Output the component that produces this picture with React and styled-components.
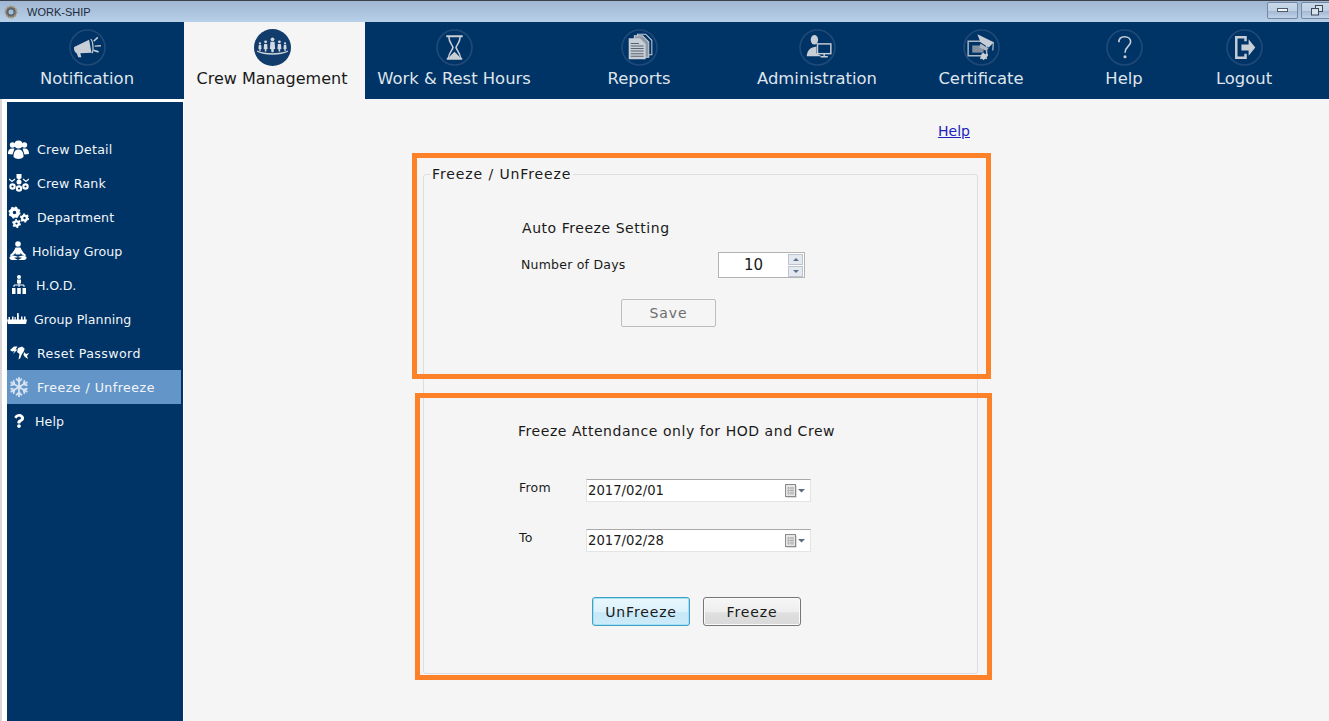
import React from 'react'
import styled, { createGlobalStyle } from 'styled-components'
import { FaQuestion, FaRegSnowflake } from 'react-icons/fa'

const GlobalStyle = createGlobalStyle`
  html, body {
    margin: 0;
    padding: 0;
    background: #f5f5f5;
    overflow: hidden;
  }
  * { box-sizing: border-box; }
`

const Window = styled.div`
  width: 1329px;
  height: 721px;
  display: flex;
  flex-direction: column;
  overflow: hidden;
  font-family: "DejaVu Sans", Verdana, sans-serif;
`

const TitleBar = styled.div`
  height: 22px;
  flex: none;
  display: flex;
  align-items: center;
  padding-left: 3px;
  border-top: 1px solid #3c414b;
  background: linear-gradient(#9fb7d2, #b8cfe8);
`

const AppName = styled.span`
  margin-left: 8px;
  font-family: "Liberation Sans", Arial, sans-serif;
  font-size: 11px;
  color: #1c2a3c;
`

const WindowButtons = styled.div`
  margin-left: auto;
  display: flex;
  gap: 3px;
  align-self: flex-start;
  margin-top: 1px;
  margin-right: -3px;
`

const WindowButton = styled.div`
  width: 31px;
  height: 17px;
  display: flex;
  align-items: center;
  justify-content: center;
  border: 1px solid #76899f;
  border-radius: 2px;
  background: linear-gradient(#c9d8ea 0%, #c0d1e5 50%, #a4bad3 55%, #bfd2e8 100%);
`

const NavBar = styled.nav`
  height: 77px;
  flex: none;
  display: flex;
  background: #003366;
`

const Tab = styled.div`
  width: ${({ $w }) => $w}px;
  flex: none;
  display: flex;
  flex-direction: column;
  align-items: center;
  padding: 7px ${({ $shift }) => $shift || 0}px 0 0;
  background: ${({ $active }) => ($active ? '#f5f5f5' : 'transparent')};
  color: ${({ $active }) => ($active ? '#1a1a1a' : '#dfe5ec')};
`

const TabIcon = styled.svg`
  width: 37px;
  height: 37px;
  display: block;
`

const TabLabel = styled.span`
  margin-top: 1px;
  font-size: ${({ $active }) => ($active ? 16 : 16.4)}px;
  line-height: 24px;
  white-space: nowrap;
`

const Body = styled.div`
  flex: 1;
  display: flex;
  min-height: 0;
`

const SideWrap = styled.aside`
  width: 184px;
  flex: none;
  padding: 3px 1px 0 5px;
  background: #fff;
  border-left: 2px solid #d8d8d8;
`

const SideMenu = styled.div`
  height: 100%;
  padding-top: 30px;
  background: #003366;
`

const SideItem = styled.div`
  height: 34px;
  width: 174px;
  display: flex;
  align-items: center;
  padding-left: ${({ $pad }) => $pad || 0}px;
  background: ${({ $active }) => ($active ? '#6495c8' : 'transparent')};
  color: #f2f5f8;
`

const SideIcon = styled.span`
  width: ${({ $w }) => $w}px;
  flex: none;
  display: flex;
  justify-content: center;
  align-items: center;
  color: #fff;
`

const SideLabel = styled.span`
  margin-left: ${({ $gap }) => $gap}px;
  font-size: 12.6px;
  letter-spacing: ${({ $ls }) => $ls || 0}px;
  white-space: nowrap;
`

const Main = styled.main`
  position: relative;
  flex: 1;
  padding: 23px 0 0 239px;
  background: #f5f5f5;
`

const HelpRow = styled.div`
  width: 555px;
  height: 18px;
  padding-right: 8px;
  margin-bottom: 25px;
  text-align: right;
  font-size: 14px;
  line-height: 18px;
`

const HelpLink = styled.a`
  color: #2222bb;
  text-decoration: underline;
`

const Group = styled.fieldset`
  width: 555px;
  height: 509px;
  margin: 0;
  padding: 0;
  border: 1px solid #dcdfe2;
  border-radius: 3px;
  min-width: 0;
`

const GroupTitle = styled.legend`
  margin-left: 6px;
  padding: 0 2px;
  font-size: 14px;
  letter-spacing: 0.9px;
  line-height: 18px;
  color: #1a1a1a;
`

const Section = styled.section`
  display: flex;
  flex-direction: column;
  align-items: flex-start;
`

const SectionTitle = styled.h3`
  margin: ${({ $top }) => $top}px 0 0 ${({ $left }) => $left}px;
  font-size: 14px;
  font-weight: 400;
  letter-spacing: 0.55px;
  line-height: 20px;
  color: #1a1a1a;
`

const FieldRow = styled.div`
  display: flex;
  align-items: ${({ $top }) => ($top ? 'flex-start' : 'center')};
  margin: ${({ $mt }) => $mt}px 0 0 ${({ $left }) => $left}px;
`

const FieldLabel = styled.label`
  width: ${({ $w }) => $w}px;
  font-size: 12.5px;
  letter-spacing: 0.22px;
  line-height: 16px;
  padding-top: ${({ $dropped }) => ($dropped ? 1 : 0)}px;
  color: #1a1a1a;
`

const Spinner = styled.div`
  width: 87px;
  height: 26px;
  display: flex;
  align-items: center;
  justify-content: space-between;
  padding: 0 1px 0 25px;
  border: 1px solid #b3b3b3;
  background: #fff;
  font-size: 15px;
  color: #1a1a1a;
`

const SpinButtons = styled.div`
  width: 15px;
  display: flex;
  flex-direction: column;
  gap: 1px;
`

const SpinButton = styled.div`
  height: 11px;
  display: flex;
  align-items: center;
  justify-content: center;
  border: 1px solid #bcc4cf;
  background: #e4e9f0;
  &::after {
    content: '';
    border-left: 3px solid transparent;
    border-right: 3px solid transparent;
    ${({ $down }) => ($down ? 'border-top' : 'border-bottom')}: 3px solid #5e6f8a;
  }
`

const SaveButton = styled.button`
  width: 95px;
  height: 28px;
  margin: 21px 0 0 197px;
  padding: 0;
  border: 1px solid #bdbdbd;
  border-radius: 2px;
  background: #f5f5f5;
  font-family: inherit;
  font-size: 14px;
  letter-spacing: 0.9px;
  color: #6e6e6e;
`

const DateField = styled.div`
  width: 225px;
  height: 23px;
  display: flex;
  align-items: center;
  justify-content: space-between;
  padding: 0 5px 0 1px;
  border: 1px solid #e4e4e4;
  border-top-color: #a9a9a9;
  background: #fff;
  font-size: 13.2px;
  color: #1a1a1a;
`

const CalendarIcon = styled.svg`
  width: 20px;
  height: 14px;
  display: block;
`

const ButtonRow = styled.div`
  display: flex;
  gap: 13px;
  margin: 45px 0 0 168px;
`

const ActionButton = styled.button`
  width: 98px;
  height: 29px;
  padding: 0;
  border-radius: 3px;
  font-family: inherit;
  font-size: 14px;
  letter-spacing: 0.85px;
  color: #1a1a1a;
  border: 1px solid ${({ $focus }) => ($focus ? '#3f9fc4' : '#777')};
  box-shadow: inset 0 0 0 1px ${({ $focus }) => ($focus ? '#a5e0f5' : '#fafafa')};
  background: ${({ $focus }) =>
    $focus
      ? 'linear-gradient(#e9f7fd 0%, #dcf1fb 50%, #c6e8f8 55%, #cdebf9 100%)'
      : 'linear-gradient(#f6f6f6 0%, #eeeeee 50%, #dfdfdf 55%, #d9d9d9 100%)'};
`

const Annotation = styled.div`
  position: absolute;
  left: ${({ $x }) => $x}px;
  top: ${({ $y }) => $y}px;
  width: ${({ $w }) => $w}px;
  height: ${({ $h }) => $h}px;
  border: 5px solid #fd8128;
  pointer-events: none;
`

const Ring = ({ dark }) =>
  dark ? (
    <circle cx="18" cy="18" r="18" fill="#123c6c" />
  ) : (
    <circle cx="18" cy="18" r="17" fill="none" stroke="#1f4a78" strokeWidth="1.6" />
  )

const tabIcons = {
  bullhorn: (
    <g fill="#c8ced6">
      <path d="M5 17.5 L19.5 10.5 L22 23 L11 23.5 L12 27.5 L9 27.5 L7.5 23.5 C5.5 23 4.5 19.5 5 17.5 Z" />
      <path d="M21 10 C23.5 11 24 21 22.5 23.5" fill="none" stroke="#c8ced6" strokeWidth="1.2" />
      <path d="M23.5 11.5 L27.5 7.5 L28.5 8.8 L24.5 12.5 Z M25 16 L31 15.5 L31 17 L25 17.2 Z M24 20 L29 21.5 L28.5 23 L23.5 21.5 Z" />
    </g>
  ),
  crew: (
    <g fill="#d3d9e0">
      <circle cx="18" cy="10" r="1.8" />
      <path d="M16 12.5 h4 l.6 7 h-1.2 l-.4 3 h-2 l-.4 -3 h-1.2 Z" />
      <circle cx="11.3" cy="12.5" r="1.4" />
      <path d="M9.8 14.5 h3 l.4 5 h-1 l-.2 2.5 h-1.4 l-.2 -2.5 h-1 Z" />
      <circle cx="24.7" cy="12.5" r="1.4" />
      <path d="M23.2 14.5 h3 l.4 5 h-1 l-.2 2.5 h-1.4 l-.2 -2.5 h-1 Z" />
      <circle cx="5.8" cy="14" r="1.1" />
      <path d="M4.6 15.5 h2.4 l.3 4 h-.8 l-.1 2 h-1.2 l-.1 -2 h-.8 Z" />
      <circle cx="30.2" cy="14" r="1.1" />
      <path d="M29 15.5 h2.4 l.3 4 h-.8 l-.1 2 h-1.2 l-.1 -2 h-.8 Z" />
      <path d="M3 21 C10 24.5 26 24.5 33 21 L33 22.2 C26 26 10 26 3 22.2 Z" />
    </g>
  ),
  hourglass: (
    <g>
      <path d="M10 7 h16 M10.5 29 h15" stroke="#c8ced6" strokeWidth="2" fill="none" />
      <path d="M12.5 7.5 C12.5 13 16 15.5 16.5 18 C16 20.5 12.5 23 12 28.5 M23.5 7.5 C23.5 13 20 15.5 19.5 18 C20 20.5 23.5 23 24 28.5" stroke="#c8ced6" strokeWidth="1.5" fill="none" />
      <path d="M12.5 28.5 C14 25 16.5 24.5 18 22 C19.5 24.5 22 25 23.5 28.5 Z" fill="#c8ced6" />
    </g>
  ),
  reports: (
    <g>
      <path d="M16 5 h8 l6 6 v14 h-14 Z" fill="#003366" stroke="#c8ced6" strokeWidth="1" />
      <path d="M13 6.5 h8 l6 6 v15 h-14 Z" fill="#8f99a6" stroke="#c8ced6" strokeWidth="1" />
      <path d="M7.5 9 h11 l5.5 5.5 v15 h-16.5 Z" fill="#c8ced6" />
      <path d="M9.5 14 h8 M9.5 16.5 h12.5 M9.5 19 h12.5 M9.5 21.5 h12.5 M9.5 24 h12.5 M9.5 26.5 h12.5" stroke="#59636f" strokeWidth="1" />
    </g>
  ),
  admin: (
    <g>
      <ellipse cx="15" cy="10.5" rx="3.6" ry="4.6" fill="#c8ced6" />
      <path d="M7.5 26.5 C8 21 10.5 19 13 18 L17 17 L17 23.5 L22 26.5 Z" fill="#c8ced6" />
      <rect x="18" y="14.5" width="13" height="9.5" fill="#003366" stroke="#c8ced6" strokeWidth="1.4" />
      <path d="M24.5 24 v2.5 M21 27 h7" stroke="#c8ced6" strokeWidth="1.4" />
    </g>
  ),
  certificate: (
    <g>
      <path d="M5 12 h18 v14 h-18 Z" fill="none" stroke="#aeb8c4" strokeWidth="1.4" />
      <path d="M9 16 h11 v7 h-11 Z" fill="#8391a1" />
      <path d="M14 5 L30 13 L25 18 L17 13 Z" fill="#c8ced6" />
      <path d="M17 14 L25 19 L22 21 L16 18 Z" fill="#aeb8c4" />
      <path d="M29.5 13 L29 21" stroke="#c8ced6" strokeWidth="1" />
      <path d="M18 24 l2 -1 l1.5 1.5 l2 -1 l1 2 l-1.5 2 l.5 2 l-2 -.5 l-1.5 1.5 l-1.5 -1.5 l-2 .5 l.5 -2 Z" fill="#c8ced6" />
    </g>
  ),
  help: (
    <g>
      <path d="M12.5 13 C12.5 9 15 7.5 18 7.5 C21.5 7.5 24 9.5 24 12.5 C24 16.5 18.5 17 18.5 23" fill="none" stroke="#c8ced6" strokeWidth="1.6" />
      <circle cx="18.5" cy="27" r="1.5" fill="#c8ced6" />
    </g>
  ),
  logout: (
    <g>
      <path d="M19 12 v-4 h-9 v20 h9 v-4" fill="none" stroke="#c8ced6" strokeWidth="2.4" />
      <path d="M15 15 h7 v-5 l6.5 8 l-6.5 8 v-5 h-7 Z" fill="#c8ced6" />
    </g>
  ),
}

const tabs = [
  { label: 'Notification', icon: 'bullhorn', w: 184, shift: 10 },
  { label: 'Crew Management', icon: 'crew', w: 181, shift: 5, active: true },
  { label: 'Work & Rest Hours', icon: 'hourglass', w: 178 },
  { label: 'Reports', icon: 'reports', w: 192 },
  { label: 'Administration', icon: 'admin', w: 164 },
  { label: 'Certificate', icon: 'certificate', w: 164 },
  { label: 'Help', icon: 'help', w: 122 },
  { label: 'Logout', icon: 'logout', w: 118 },
]

const People = () => (
  <svg width="21" height="19" viewBox="0 0 21 19" fill="currentColor">
    <circle cx="4.5" cy="5" r="2.7" />
    <circle cx="16.5" cy="5" r="2.7" />
    <path d="M0 14 C0 10 1.5 8.5 4.5 8.5 L6.5 8.5 L4.5 14.5 Z M21 14 C21 10 19.5 8.5 16.5 8.5 L14.5 8.5 L16.5 14.5 Z" />
    <circle cx="10.5" cy="4.5" r="4" />
    <path d="M5.5 17 C5.5 12 7 9.5 10.5 9.5 C14 9.5 15.5 12 15.5 17 C13 19.5 8 19.5 5.5 17 Z" />
  </svg>
)

const Medals = () => (
  <svg width="20" height="18" viewBox="0 0 20 18" fill="currentColor">
    <path d="M7.5 0 h5 v4 l-2.5 2 l-2.5 -2 Z" />
    <circle cx="10" cy="8" r="2.5" />
    <path d="M0 5 l3 2.5 l3 -2.5 M14 5 l3 2.5 l3 -2.5" fill="none" stroke="currentColor" strokeWidth="1.2" />
    <circle cx="3.5" cy="12.5" r="3.2" />
    <circle cx="16.5" cy="12.5" r="3.2" />
    <circle cx="10" cy="14.5" r="3.2" />
    <circle cx="3.5" cy="12.5" r="1.1" fill="#003366" />
    <circle cx="16.5" cy="12.5" r="1.1" fill="#003366" />
    <circle cx="10" cy="14.5" r="1.1" fill="#003366" />
  </svg>
)

const Gear = ({ cx, cy, r, teeth }) => {
  const c = 2 * Math.PI * (r + 0.6)
  const step = c / (teeth * 2)
  return (
    <g>
      <circle cx={cx} cy={cy} r={r + 0.6} fill="none" stroke="currentColor" strokeWidth="2" strokeDasharray={`${step} ${step}`} />
      <circle cx={cx} cy={cy} r={r * 0.8} fill="none" stroke="currentColor" strokeWidth={r * 0.8} />
    </g>
  )
}

const Gears = () => (
  <svg width="21" height="22" viewBox="0 0 21 22">
    <Gear cx={6.5} cy={6.5} r={4.4} teeth={8} />
    <Gear cx={16.5} cy={12} r={3} teeth={6} />
    <Gear cx={8.5} cy={17.5} r={2.8} teeth={6} />
  </svg>
)

const Meditate = () => (
  <svg width="18" height="20" viewBox="0 0 18 20" fill="currentColor">
    <circle cx="9" cy="3" r="2.8" />
    <path d="M6.5 6.5 h5 C12.5 9 13.5 11 17 14 L16 15.5 C13.5 14 12 13 11.5 11.5 L11.5 13.5 L6.5 13.5 L6.5 11.5 C6 13 4.5 14 2 15.5 L1 14 C4.5 11 5.5 9 6.5 6.5 Z" />
    <path d="M4.5 14.5 L10 16 L5 16.8 L9 19 L3 19 C1 19 -.5 17 1 15.5 Z M13.5 14.5 L8 16 L13 16.8 L9 19 L15 19 C17 19 18.5 17 17 15.5 Z" />
  </svg>
)

const Hierarchy = () => (
  <svg width="14" height="20" viewBox="0 0 14 20" fill="currentColor">
    <circle cx="7" cy="2" r="2" />
    <path d="M5 4.5 h4 v4 h-4 Z" />
    <path d="M2 12 v-2 h10 v2 M7 8 v4" fill="none" stroke="currentColor" />
    <path d="M0 13 h3.5 v6 h-3.5 Z M5.2 13 h3.6 v6 h-3.6 Z M10.5 13 h3.5 v6 h-3.5 Z" />
  </svg>
)

const Planning = () => (
  <svg width="20" height="12" viewBox="0 0 20 12" fill="currentColor">
    <path d="M0 6.5 L20 6.5 L19 11 L1 11 Z" />
    <path d="M1.5 4 h1.5 v3 h-1.5 Z M5 3.5 h1.5 v3.5 h-1.5 Z M7.5 4 h1.2 v3 h-1.2 Z M10 1.5 h1.8 v5.5 h-1.8 Z M14 3.5 h1.5 v3.5 h-1.5 Z M17 3.5 h1.5 v3.5 h-1.5 Z" />
    <circle cx="10.9" cy="1" r="1" />
  </svg>
)

const ResetPass = () => (
  <svg width="19" height="14" viewBox="0 0 19 14" fill="currentColor">
    <path d="M0 4 L4 0.5 L7.5 0.5 L5.5 3.5 L7.5 3.5 L3 8 L4.5 5 L2 5.5 Z" />
    <path d="M8 2 L12 0.5 L14.5 2.5 C14.5 6 11.5 7 10.5 12 L8.5 13.5 L9.5 8 L7 6 Z" />
    <path d="M14 6 l2 2 l3 -1 l-2 3 l1 3 l-3 -2 l-1.5 -2 Z" />
  </svg>
)

const menu = [
  { label: 'Crew Detail', icon: <People />, w: 21, pad: 1, gap: 8, ls: 0.25 },
  { label: 'Crew Rank', icon: <Medals />, w: 20, pad: 2, gap: 8, ls: 0.2 },
  { label: 'Department', icon: <Gears />, w: 21, pad: 1, gap: 8, ls: 0.1 },
  { label: 'Holiday Group', icon: <Meditate />, w: 18, pad: 2, gap: 5, ls: 0.05 },
  { label: 'H.O.D.', icon: <Hierarchy />, w: 14, pad: 5, gap: 10 },
  { label: 'Group Planning', icon: <Planning />, w: 20, pad: 0, gap: 7, ls: 0.05 },
  { label: 'Reset Password', icon: <ResetPass />, w: 19, pad: 3, gap: 8, ls: 0.42 },
  { label: 'Freeze / Unfreeze', icon: <FaRegSnowflake size={20} color="#d5e3f2" />, w: 20, pad: 2, gap: 8, ls: 0.48, active: true },
  { label: 'Help', icon: <FaQuestion size={14} />, w: 14, pad: 5, gap: 9, ls: 0.1 },
]

const Calendar = () => (
  <CalendarIcon viewBox="0 0 20 14">
    <rect x="1.5" y="1.5" width="10" height="12" fill="#b9b9b9" />
    <rect x="0.5" y="0.5" width="10" height="12" fill="#e6e6e6" stroke="#8a8a8a" />
    <path d="M2 4 h7 M2 6.5 h7 M2 9 h7 M3.5 3 v8 M6 3 v8 M8 3 v8" stroke="#a8a8a8" strokeWidth="0.7" />
    <path d="M13 5 h7 l-3.5 3.5 Z" fill="#5d6b80" />
  </CalendarIcon>
)

const App = () => {
  return (
    <Window>
      <GlobalStyle />
      <TitleBar>
        <svg width="16" height="16" viewBox="0 0 16 16">
          <circle cx="8" cy="8" r="5.5" fill="#5f6468" stroke="#a89a7c" strokeWidth="2" strokeDasharray="2 1" />
          <circle cx="8" cy="8" r="2.5" fill="#9fc0dc" />
        </svg>
        <AppName>WORK-SHIP</AppName>
        <WindowButtons>
          <WindowButton>
            <svg width="12" height="5" viewBox="0 0 12 5">
              <rect x="0.5" y="0.5" width="10" height="3" fill="#f4f6f8" stroke="#4d5a6b" />
            </svg>
          </WindowButton>
          <WindowButton>
            <svg width="12" height="11" viewBox="0 0 12 11" fill="none" stroke="#3f4a59">
              <rect x="4.5" y="0.5" width="7" height="6" fill="#d8e2ee" />
              <rect x="0.5" y="3.5" width="7" height="6.5" fill="#d8e2ee" />
            </svg>
          </WindowButton>
        </WindowButtons>
      </TitleBar>
      <NavBar>
        {tabs.map((t) => (
          <Tab key={t.label} $w={t.w} $shift={t.shift} $active={t.active}>
            <TabIcon viewBox="0 0 36 36">
              <Ring dark={t.active} />
              {tabIcons[t.icon]}
            </TabIcon>
            <TabLabel $active={t.active}>{t.label}</TabLabel>
          </Tab>
        ))}
      </NavBar>
      <Body>
        <SideWrap>
          <SideMenu>
            {menu.map((m) => (
              <SideItem key={m.label} $pad={m.pad} $active={m.active}>
                <SideIcon $w={m.w}>{m.icon}</SideIcon>
                <SideLabel $gap={m.gap} $ls={m.ls}>{m.label}</SideLabel>
              </SideItem>
            ))}
          </SideMenu>
        </SideWrap>
        <Main>
          <HelpRow>
            <HelpLink href="#">Help</HelpLink>
          </HelpRow>
          <Group>
            <GroupTitle>Freeze / UnFreeze</GroupTitle>
            <Section>
              <SectionTitle $top={35} $left={98}>Auto Freeze Setting</SectionTitle>
              <FieldRow $mt={14} $left={97}>
                <FieldLabel $w={197}>Number of Days</FieldLabel>
                <Spinner>
                  10
                  <SpinButtons>
                    <SpinButton />
                    <SpinButton $down />
                  </SpinButtons>
                </Spinner>
              </FieldRow>
              <SaveButton>Save</SaveButton>
            </Section>
            <Section>
              <SectionTitle $top={94} $left={94}>Freeze Attendance only for HOD and Crew</SectionTitle>
              <FieldRow $mt={38} $left={95} $top>
                <FieldLabel $w={67} $dropped>From</FieldLabel>
                <DateField>2017/02/01<Calendar /></DateField>
              </FieldRow>
              <FieldRow $mt={27} $left={95} $top>
                <FieldLabel $w={67} $dropped>To</FieldLabel>
                <DateField>2017/02/28<Calendar /></DateField>
              </FieldRow>
              <ButtonRow>
                <ActionButton $focus>UnFreeze</ActionButton>
                <ActionButton>Freeze</ActionButton>
              </ButtonRow>
            </Section>
          </Group>
          <Annotation $x={228} $y={54} $w={579} $h={226} />
          <Annotation $x={231} $y={294} $w={577} $h={287} />
        </Main>
      </Body>
    </Window>
  )
}

export default App
